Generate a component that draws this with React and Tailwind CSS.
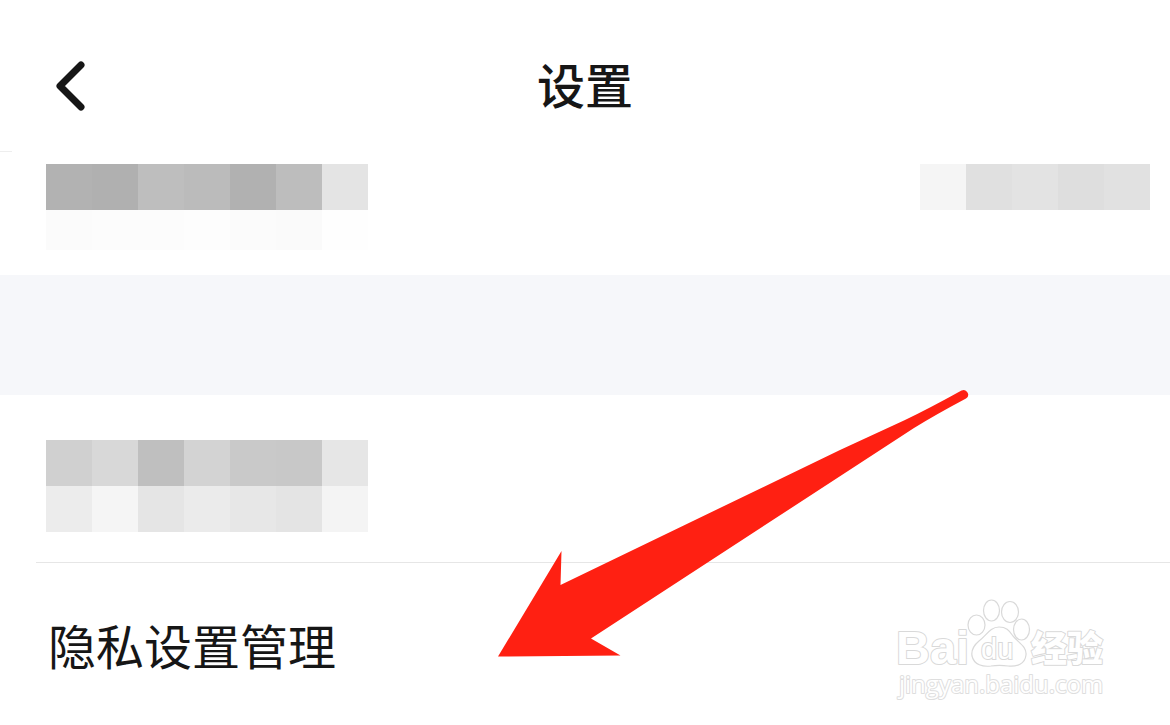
import React from 'react';

const accountTiles = [
  ['bg-[#b2b2b2]', 'bg-[#b0b0b0]', 'bg-[#bebebe]', 'bg-[#bbbbbb]', 'bg-[#b1b1b1]', 'bg-[#bdbdbd]', 'bg-[#e4e4e4]'],
];

const accountFade = ['bg-[#fbfbfb]', 'bg-[#fcfcfc]', 'bg-[#fcfcfc]', 'bg-[#fdfdfd]', 'bg-[#fbfbfb]', 'bg-[#fafafa]', 'bg-[#fefefe]'];

const valueTiles = [
  ['bg-[#f5f5f5]', 'bg-[#e0e0e0]', 'bg-[#e3e3e3]', 'bg-[#dedede]', 'bg-[#e1e1e1]'],
];

const sectionTiles = [
  ['bg-[#d0d0d0]', 'bg-[#d8d8d8]', 'bg-[#bfbfbf]', 'bg-[#d3d3d3]', 'bg-[#c9c9c9]', 'bg-[#c8c8c8]', 'bg-[#e6e6e6]'],
  ['bg-[#ececec]', 'bg-[#f5f5f5]', 'bg-[#e5e5e5]', 'bg-[#ebebeb]', 'bg-[#e7e7e7]', 'bg-[#e4e4e4]', 'bg-[#f4f4f4]'],
];

// Hidden text, shown as blocks of grey
function Mosaic({ rows }) {
  return (
    <div aria-hidden="true">
      {rows.map((row, i) => (
        <div key={i} className="flex">
          {row.map((color, j) => (
            <span key={j} className={`w-[46px] h-[46px] ${color}`} />
          ))}
        </div>
      ))}
    </div>
  );
}

function Arrow() {
  return (
    <svg
      className="absolute left-[497px] top-[388px] pointer-events-none"
      width="474"
      height="270"
      viewBox="497 388 474 270"
      fill="#ff2012"
      aria-hidden="true"
    >
      <path d="M498 656.500L561.500 551L560.500 585L840 450L905 420Q930 408 961.500 390.500A4.600 4.600 0 0 1 966 398.500Q935 415 914 428L591 638.500L620.500 655.500Z" />
    </svg>
  );
}

function Watermark() {
  return (
    <svg
      className="absolute right-[60px] top-[596px] pointer-events-none"
      width="220"
      height="108"
      viewBox="890 596 220 108"
      fill="#ffffff"
      stroke="#d9d9d9"
      strokeWidth="1.200"
      aria-hidden="true"
    >
      <g strokeWidth="2" paintOrder="stroke" strokeLinejoin="round">
        <text x="896" y="664" fontSize="47" fontWeight="700" className="font-['Liberation_Sans',sans-serif]">Bai</text>
        <text x="1031" y="662" fontSize="36" fontWeight="900" className="font-['Noto_Sans_CJK_SC',sans-serif]">经验</text>
        <text x="899" y="693" fontSize="24" fontWeight="400" stroke="#dedede" className="font-['Open_Sans',sans-serif]">jingyan.baidu.com</text>
      </g>
      <ellipse cx="976.500" cy="625" rx="8.500" ry="10" />
      <ellipse cx="991.500" cy="610.500" rx="8" ry="10.500" />
      <ellipse cx="1010" cy="612" rx="8.500" ry="10.500" />
      <ellipse cx="1021.500" cy="629.500" rx="8" ry="10.500" />
      <path d="M999 627C990 627 986 636 979 641C973 646 971 650 972 656C974 665 983 667 991 666C997 665 1002 665 1008 666C1017 667 1025 664 1026 655C1027 647 1019 643 1013 636C1009 630 1006 627 999 627Z" />
      <text x="981" y="659" fontSize="29" fontWeight="400" strokeWidth="2" paintOrder="stroke" className="font-['Liberation_Sans',sans-serif]">du</text>
    </svg>
  );
}

export default function App() {
  return (
    <main className="relative min-h-screen overflow-hidden bg-white text-[#161616] font-['Noto_Sans_CJK_SC',sans-serif]">
      <header className="grid grid-cols-[1fr_auto_1fr] items-center h-[151px] px-[46px] pt-5">
        <button type="button" aria-label="返回" className="justify-self-start">
          <svg width="48" height="56" viewBox="0 0 48 56" fill="none" stroke="currentColor" strokeWidth="7" strokeLinecap="round" strokeLinejoin="round">
            <path d="M35 7L14 28L35 49" />
          </svg>
        </button>
        <h1 className="pb-1.5 text-[48px] leading-[56px] font-medium">设置</h1>
      </header>
      <div className="w-3 h-px bg-[#eeeeee]" />

      <section className="flex justify-between h-[123px] pt-3 pl-[46px] pr-5">
        <div>
          <Mosaic rows={accountTiles} />
          <div className="flex" aria-hidden="true">
            {accountFade.map((color, i) => (
              <span key={i} className={`w-[46px] h-10 ${color}`} />
            ))}
          </div>
        </div>
        <Mosaic rows={valueTiles} />
      </section>

      <div className="h-[120px] bg-[#f6f7fa]" />

      <section>
        <div className="h-[167px] pt-[45px] pl-[46px]">
          <Mosaic rows={sectionTiles} />
        </div>
        <div className="ml-9 h-px bg-[#e6e6e6]" />
        <a href="#privacy" className="flex items-center h-[162px] pl-12 text-[48px] leading-[56px]">
          隐私设置管理
        </a>
      </section>

      <Watermark />
      <Arrow />
    </main>
  );
}
